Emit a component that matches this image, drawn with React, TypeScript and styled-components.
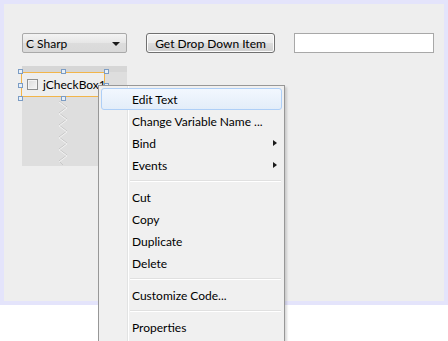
import * as React from 'react'
import styled, { createGlobalStyle } from 'styled-components'

const GlobalStyle = createGlobalStyle`
  html, body {
    margin: 0;
    padding: 0;
    background: #ffffff;
  }
  body {
    font-family: Lato, "Noto Sans", "Open Sans", sans-serif;
    font-size: 12px;
    color: #000;
  }
`

const Screen = styled.div`
  position: relative;
  width: 448px;
  height: 341px;
  overflow: hidden;
  background: #ffffff;
`

const Frame = styled.div`
  box-sizing: border-box;
  width: 448px;
  height: 305px;
  border: 4px solid #e4e4fb;
  background: #eeeeee;
`

const Toolbar = styled.div`
  display: flex;
  align-items: center;
  gap: 19px;
  padding: 29px 0 0 18px;
`

const Combo = styled.div`
  box-sizing: border-box;
  display: flex;
  align-items: center;
  justify-content: space-between;
  width: 105px;
  height: 20px;
  padding: 0 6px 0 3px;
  border: 1px solid #a9a9a9;
  border-radius: 2px;
  background: linear-gradient(#f3f3f3, #e6e6e6 50%, #dcdcdc 51%, #d9d9d9);
`

const ComboArrow = styled.span`
  width: 0;
  height: 0;
  margin-top: 2px;
  border-left: 4px solid transparent;
  border-right: 4px solid transparent;
  border-top: 4px solid #1a1a1a;
`

const Button = styled.div`
  box-sizing: border-box;
  display: flex;
  align-items: center;
  justify-content: center;
  width: 129px;
  height: 20px;
  border: 1px solid #707070;
  border-radius: 3px;
  background: linear-gradient(#f2f2f2, #ebebeb 50%, #dddddd 51%, #cfcfcf);
  box-shadow: inset 0 0 0 1px #fcfcfc;
`

const TextField = styled.div`
  box-sizing: border-box;
  width: 140px;
  height: 20px;
  border: 1px solid #a8a8a8;
  background: #ffffff;
`

const Canvas = styled.div`
  padding: 13px 0 0 18px;
`

const LayoutBox = styled.div`
  position: relative;
  box-sizing: border-box;
  width: 105px;
  height: 100px;
  border-top: 6px solid #d6d6d6;
  background: #dedede;
`

const Selected = styled.div`
  position: relative;
  box-sizing: border-box;
  display: flex;
  align-items: center;
  gap: 5px;
  width: 84px;
  height: 25px;
  margin-left: -1px;
  padding-left: 5px;
  border: 1px solid #f2b54a;
  background: #eeeeee;
  white-space: nowrap;
`

const CheckBox = styled.span`
  flex-shrink: 0;
  box-sizing: border-box;
  width: 11px;
  height: 11px;
  border: 1px solid #8e8f8f;
  background: linear-gradient(135deg, #dcdcdc, #f6f6f6);
  box-shadow: inset 0 0 0 1px #f4f4f4;
`

const Handle = styled.span<{ $x: number; $y: number }>`
  position: absolute;
  left: ${(p) => p.$x}px;
  top: ${(p) => p.$y}px;
  box-sizing: border-box;
  width: 5px;
  height: 5px;
  border: 1px solid #7b9cc4;
  background: #e8f0f8;
`

const Zigzag = styled.svg`
  display: block;
  margin: 4px 0 0 34px;
`

const Menu = styled.div`
  position: absolute;
  left: 98px;
  top: 85px;
  box-sizing: border-box;
  width: 187px;
  height: 270px;
  padding: 2px 2px;
  border: 1px solid #979797;
  background: #f0f0f0;
  box-shadow: 2px 2px 2px rgba(0, 0, 0, 0.15);
`

const Gutter = styled.div`
  position: absolute;
  left: 28px;
  top: 0;
  bottom: 0;
  width: 1px;
  border-left: 1px solid #e2e3e3;
  background: #ffffff;
`

const Item = styled.div<{ $active?: boolean }>`
  position: relative;
  box-sizing: border-box;
  display: flex;
  align-items: center;
  height: 22px;
  padding-left: 30px;
  border: 1px solid ${(p) => (p.$active ? '#aecff7' : 'transparent')};
  border-radius: 3px;
  background: ${(p) =>
    p.$active ? 'linear-gradient(#f2f7fe, #e3edf9)' : 'transparent'};
`

const SubArrow = styled.span`
  position: absolute;
  right: 4px;
  top: 7px;
  width: 0;
  height: 0;
  border-top: 3.5px solid transparent;
  border-bottom: 3.5px solid transparent;
  border-left: 4px solid #1a1a1a;
`

const Separator = styled.div`
  height: 1px;
  margin: 4px 1px 4px 29px;
  border-bottom: 1px solid #ffffff;
  background: #e0e0e0;
`

interface MenuEntry {
  label?: string
  sub?: boolean
  active?: boolean
}

const entries: MenuEntry[] = [
  { label: 'Edit Text', active: true },
  { label: 'Change Variable Name ...' },
  { label: 'Bind', sub: true },
  { label: 'Events', sub: true },
  {},
  { label: 'Cut' },
  { label: 'Copy' },
  { label: 'Duplicate' },
  { label: 'Delete' },
  {},
  { label: 'Customize Code...' },
  {},
  { label: 'Properties' },
]

const handles = [
  [-4, -4],
  [39, -4],
  [82, -4],
  [-4, 10],
  [82, 10],
  [-4, 23],
  [39, 23],
  [82, 23],
]

export default function App() {
  return (
    <Screen>
      <GlobalStyle />
      <Frame>
        <Toolbar>
          <Combo>
            <span>C Sharp</span>
            <ComboArrow />
          </Combo>
          <Button>Get Drop Down Item</Button>
          <TextField />
        </Toolbar>
        <Canvas>
          <LayoutBox>
            <Selected>
              <CheckBox />
              <span>jCheckBox1</span>
              {handles.map(([x, y], i) => (
                <Handle key={i} $x={x} $y={y} />
              ))}
            </Selected>
            <Zigzag width="14" height="64" viewBox="0 0 14 64">
              <polyline
                points="3,0 11,6 3,12 11,18 3,24 11,30 3,36 11,42 3,48 11,54 3,60 7,64"
                fill="none"
                stroke="#c8c8c8"
                strokeWidth="1"
              />
              <polyline
                points="3,1 11,7 3,13 11,19 3,25 11,31 3,37 11,43 3,49 11,55 3,61"
                fill="none"
                stroke="#f2f2f2"
                strokeWidth="1"
              />
            </Zigzag>
          </LayoutBox>
        </Canvas>
      </Frame>
      <Menu>
        <Gutter />
        {entries.map((e, i) =>
          e.label ? (
            <Item key={i} $active={e.active}>
              {e.label}
              {e.sub && <SubArrow />}
            </Item>
          ) : (
            <Separator key={i} />
          ),
        )}
      </Menu>
    </Screen>
  )
}
